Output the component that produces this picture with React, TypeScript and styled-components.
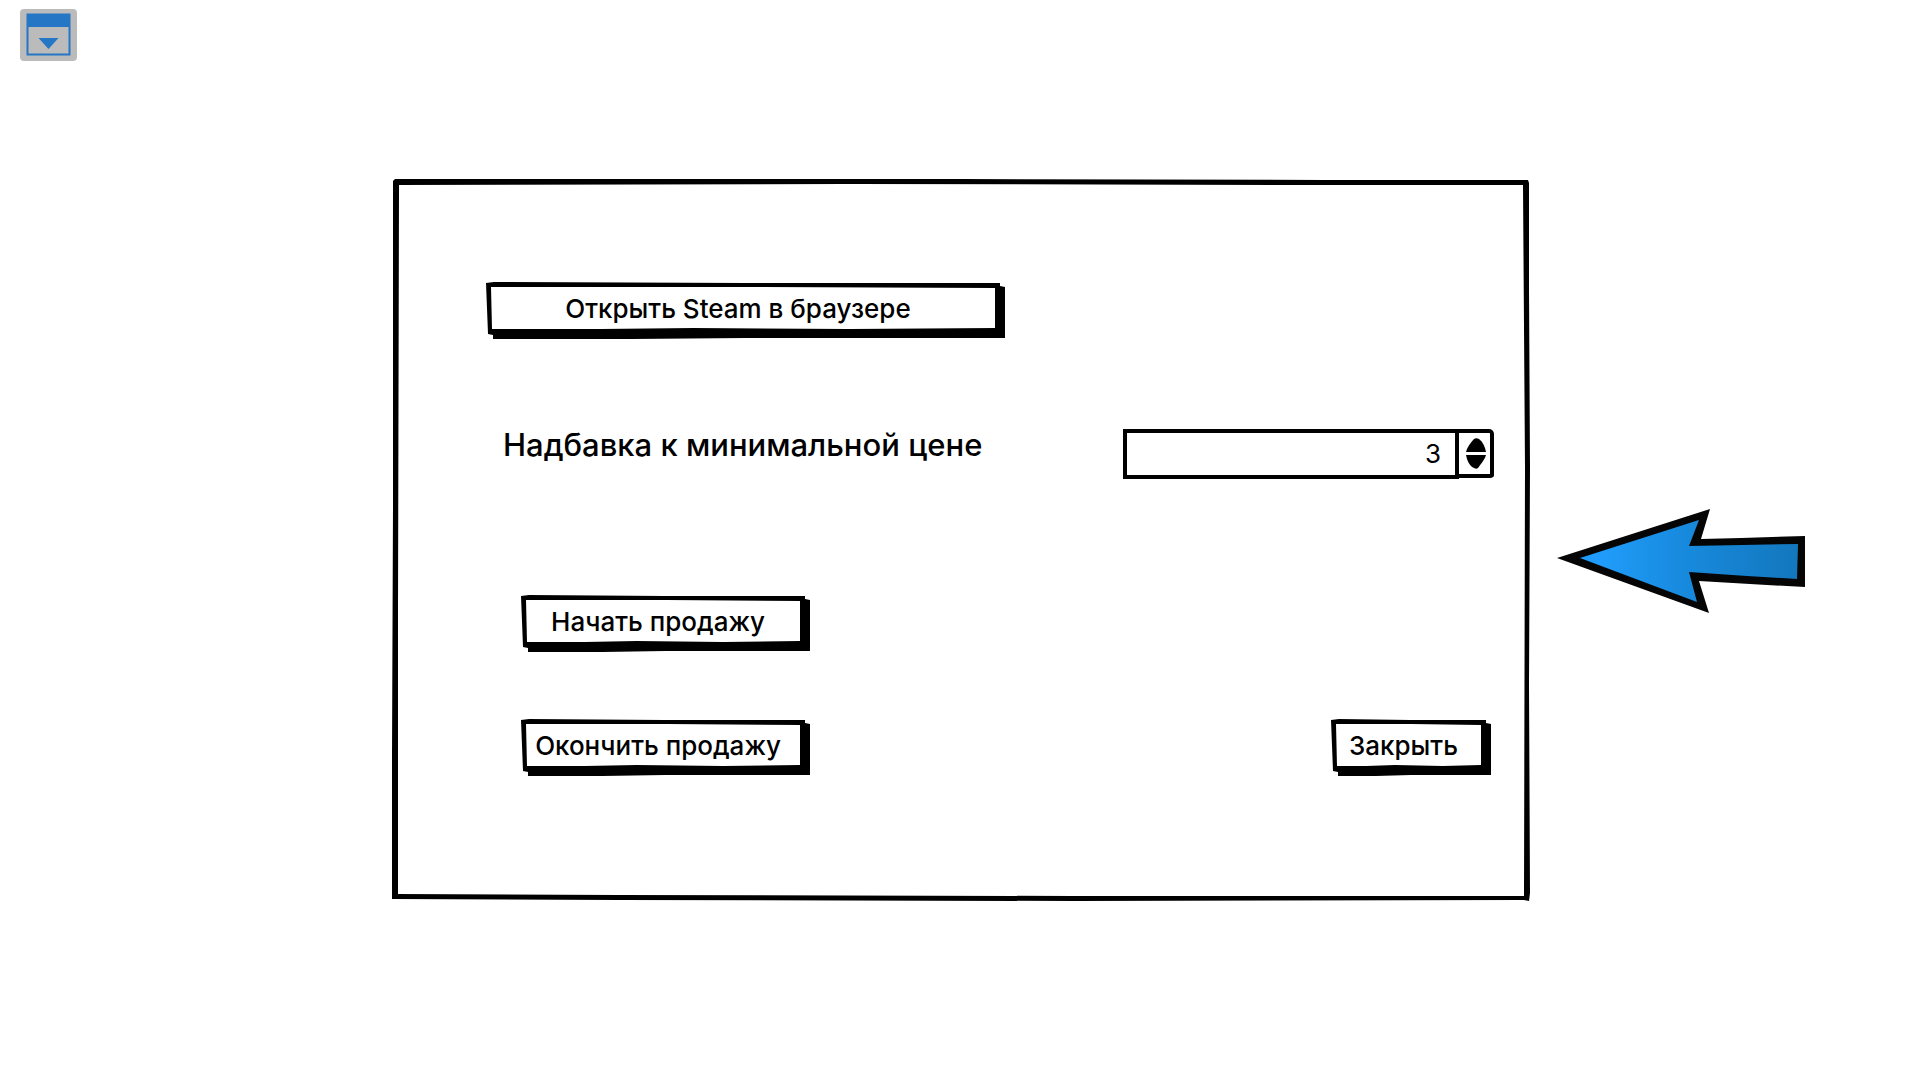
import React, { useState } from 'react';
import styled, { createGlobalStyle } from 'styled-components';

const INK = '#000';
const PAPER = '#fff';

const GlobalStyle = createGlobalStyle`
  *, *::before, *::after { box-sizing: border-box; }
  body {
    margin: 0;
    background: ${PAPER};
    color: ${INK};
    font-family: Inter, "Noto Sans", sans-serif;
    font-weight: 500;
  }
  button, input { font: inherit; color: inherit; }
`;

const Page = styled.div`
  display: flex;
  flex-direction: column;
  min-height: 100vh;
`;

const TopBar = styled.header`
  display: flex;
  padding: 9px 20px 0;
`;

const MenuButton = styled.button`
  display: flex;
  align-items: center;
  justify-content: center;
  width: 57px;
  height: 52px;
  padding: 0;
  border: 0;
  border-radius: 4px;
  background: #bbb;
  cursor: pointer;
`;

const Stage = styled.main`
  display: grid;
  grid-template-columns: 392fr 1138fr 390fr;
  align-items: center;
  padding: 118px 0 0;
`;

/* Ink-filled shape with a paper cut-out: both edges wobble as if drawn by hand. */
const Panel = styled.section`
  position: relative;
  grid-column: 2;
  display: flex;
  flex-direction: column;
  padding: 103px 36px 125px 94px;
  background: ${INK};
  clip-path: polygon(
    1px 2px, 3px 0, 50% 0, 82% 1px, calc(100% - 2px) 1px, calc(100% - 1px) 4px,
    calc(100% - 1px) 15%, 100% 40%, calc(100% - 1px) 70%, 100% calc(100% - 8px),
    calc(100% - 1px) 100%, calc(100% - 6px) calc(100% - 1px), 60% 100%, 20% calc(100% - 1px), 0 calc(100% - 2px),
    0 80%, 1px 45%
  );

  &::before {
    content: '';
    position: absolute;
    inset: 0;
    background: ${PAPER};
    clip-path: polygon(
      7px 6px, 40% 5px, 82% 6px, calc(100% - 7px) 6px,
      calc(100% - 5px) 40%, calc(100% - 6px) calc(100% - 5px),
      60% calc(100% - 5px), 20% calc(100% - 6px), 6px calc(100% - 7px), 6px 60%
    );
  }

  & > * { position: relative; }
`;

const SketchButton = styled.button<{ $width: number }>`
  position: relative;
  width: ${(p) => p.$width}px;
  max-width: 100%;
  height: 57px;
  padding: 0 15px 4px 0;
  border: 0;
  background: ${INK};
  font-size: 26px;
  line-height: 32px;
  white-space: nowrap;
  cursor: pointer;
  clip-path: polygon(
    0 1px, 8px 0, 50% 1px, calc(100% - 5px) 1px, calc(100% - 5px) 4px, 100% 5px,
    100% 56px, 50% 56px, 28% 100%, 7px 100%, 7px 53px, 2px 52px
  );

  &::before {
    content: '';
    position: absolute;
    inset: 0;
    background: ${PAPER};
    clip-path: polygon(
      5px 5px, 50% 5px, calc(100% - 10px) 6px,
      calc(100% - 10px) 46px, 70% 47px, 40% 46px, 22% 47px, 6px 47px
    );
  }

  &:active::before { background: #eee; }
`;

const Caption = styled.span`
  position: relative;
`;

const MarkupRow = styled.div`
  display: flex;
  align-items: flex-start;
  justify-content: space-between;
  gap: 24px;
  margin-top: 90px;
  padding-left: 17px;
`;

const MarkupLabel = styled.label`
  font-size: 31px;
  line-height: 32px;
`;

const Spinner = styled.div`
  display: flex;
  width: 371px;
  height: 50px;
`;

const SpinnerInput = styled.input`
  flex: 1;
  min-width: 0;
  padding: 0 14px 2px;
  border: 4px solid ${INK};
  background: ${PAPER};
  font-size: 26px;
  font-weight: 400;
  text-align: right;
  outline: none;
`;

const Stepper = styled.div`
  display: flex;
  flex-direction: column;
  justify-content: center;
  gap: 2px;
  width: 35px;
  height: 49px;
  padding-left: 2px;
  border: 4px solid ${INK};
  border-left: 0;
  border-radius: 0 5px 4px 0;
  background: ${PAPER};
`;

const StepButton = styled.button`
  display: flex;
  justify-content: center;
  padding: 0;
  border: 0;
  background: none;
  cursor: pointer;
`;

const Actions = styled.div`
  display: flex;
  align-items: flex-end;
  justify-content: space-between;
  margin-top: 116px;
  padding: 0 3px 0 35px;
`;

const ActionStack = styled.div`
  display: flex;
  flex-direction: column;
  gap: 67px;
`;

const Pointer = styled.div`
  display: flex;
  padding: 42px 0 0 27px;
`;

function WindowIcon() {
  return (
    <svg width="45" height="44" viewBox="0 0 45 44" aria-hidden="true">
      <rect x="1.5" y="1.5" width="42" height="40" fill="none" stroke="#2577c5" strokeWidth="2" />
      <rect x="1" y="1" width="43" height="13" fill="#2577c5" />
      <path d="M12.5 25h20L22.5 36z" fill="#2577c5" />
    </svg>
  );
}

function BlueArrow() {
  return (
    <svg width="250" height="106" viewBox="0 0 250 106" role="img" aria-label="Стрелка влево">
      <defs>
        <linearGradient id="arrowFill" x1="0" x2="1" y1="0" y2="0">
          <stop offset="0.1" stopColor="#1f9cfa" />
          <stop offset="0.45" stopColor="#188bdf" />
          <stop offset="1" stopColor="#1377bd" />
        </linearGradient>
      </defs>
      <path d="M0 50 L153 1 L144 31 L184 30 L248 28 L248 79 L210 77 L142 73 L152 105 Z" fill="#050505" />
      <path d="M23 50 L142 12 L132 38 L186 37 L241 36 L240 71 L190 68 L132 64 L140 94 Z" fill="url(#arrowFill)" />
    </svg>
  );
}

export default function App() {
  const [markup, setMarkup] = useState(3);

  return (
    <>
      <GlobalStyle />
      <Page>
        <TopBar>
          <MenuButton type="button" aria-label="Меню">
            <WindowIcon />
          </MenuButton>
        </TopBar>
        <Stage>
          <Panel>
            <SketchButton type="button" $width={519}>
              <Caption>Открыть Steam в браузере</Caption>
            </SketchButton>
            <MarkupRow>
              <MarkupLabel htmlFor="markup">Надбавка к минимальной цене</MarkupLabel>
              <Spinner>
                <SpinnerInput
                  id="markup"
                  type="text"
                  inputMode="numeric"
                  value={markup}
                  onChange={(e) => setMarkup(Number(e.target.value) || 0)}
                />
                <Stepper>
                  <StepButton type="button" aria-label="Увеличить" onClick={() => setMarkup(markup + 1)}>
                    <svg width="20" height="14" viewBox="0 0 20 14" aria-hidden="true">
                      <path d="M0 14 C1 10 4 5 8 1 Q10 -0.500 13 1 C17 4 19 9 20 14Z" fill={INK} />
                    </svg>
                  </StepButton>
                  <StepButton type="button" aria-label="Уменьшить" onClick={() => setMarkup(Math.max(0, markup - 1))}>
                    <svg width="20" height="15" viewBox="0 0 20 15" aria-hidden="true">
                      <path d="M0 1H20C19 5 15 10 12 14Q10 15.500 7 13.500C3 11 1 6 0 1Z" fill={INK} />
                    </svg>
                  </StepButton>
                </Stepper>
              </Spinner>
            </MarkupRow>
            <Actions>
              <ActionStack>
                <SketchButton type="button" $width={289}>
                  <Caption>Начать продажу</Caption>
                </SketchButton>
                <SketchButton type="button" $width={289}>
                  <Caption>Окончить продажу</Caption>
                </SketchButton>
              </ActionStack>
              <SketchButton type="button" $width={160}>
                <Caption>Закрыть</Caption>
              </SketchButton>
            </Actions>
          </Panel>
          <Pointer>
            <BlueArrow />
          </Pointer>
        </Stage>
      </Page>
    </>
  );
}
